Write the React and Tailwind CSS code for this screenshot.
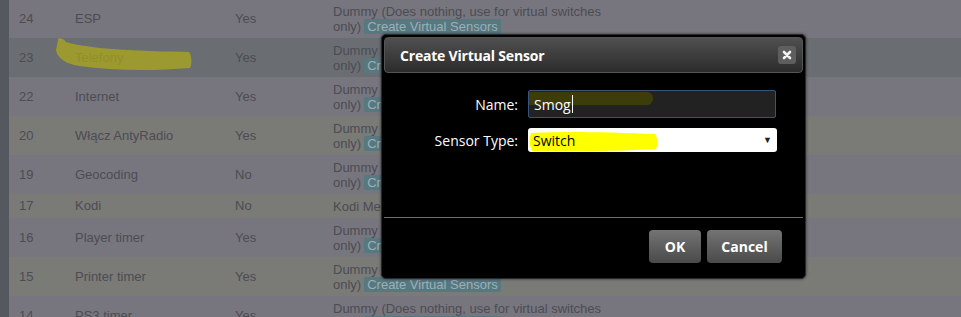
import React from 'react';

const rows = [
  { id: 24, name: 'ESP', enabled: 'Yes', type: 'dummy', h: 'h-[38px]', bg: 'bg-[#77767e]' },
  { id: 23, name: 'Telefony', enabled: 'Yes', type: 'dummy', h: 'h-[39px]', bg: 'bg-[#6a6e72]' },
  { id: 22, name: 'Internet', enabled: 'Yes', type: 'dummy', h: 'h-[39px]', bg: 'bg-[#77767e]' },
  { id: 20, name: 'Włącz AntyRadio', enabled: 'Yes', type: 'dummy', h: 'h-[39px]', bg: 'bg-[#7a7a77]' },
  { id: 19, name: 'Geocoding', enabled: 'No', type: 'dummy', h: 'h-[39px]', bg: 'bg-[#77767e]' },
  { id: 17, name: 'Kodi', enabled: 'No', type: 'kodi', h: 'h-[24px]', bg: 'bg-[#7a7a77]' },
  { id: 16, name: 'Player timer', enabled: 'Yes', type: 'dummy', h: 'h-[39px]', bg: 'bg-[#77767e]' },
  { id: 15, name: 'Printer timer', enabled: 'Yes', type: 'dummy', h: 'h-[39px]', bg: 'bg-[#7a7a77]' },
  { id: 14, name: 'PS3 timer', enabled: 'Yes', type: 'dummy', h: 'h-[39px]', bg: 'bg-[#77767e]' },
];

function TypeCell({ type }) {
  if (type === 'kodi') {
    return <div className="leading-[15px]">Kodi Media Server</div>;
  }
  return (
    <div className="leading-[15px]">
      <div className="whitespace-nowrap">Dummy (Does nothing, use for virtual switches</div>
      <div className="flex items-center whitespace-nowrap">
        only)
        <span className="ml-[3px] bg-[#587880] text-[#9ab0b7] px-[3px] leading-[15px] rounded-[1px]">
          Create Virtual Sensors
        </span>
      </div>
    </div>
  );
}

function HardwareTable() {
  return (
    <div className="flex-1 flex flex-col text-[13px] text-[#4c4c53]">
      {rows.map((r) => (
        <div key={r.id} className={`flex items-center shrink-0 ${r.h} ${r.bg}`}>
          <div className="w-[66px] pl-[10px]">{r.id}</div>
          <div className="w-[160px]">{r.name}</div>
          <div className="w-[98px]">{r.enabled}</div>
          <div className="flex-1">
            <TypeCell type={r.type} />
          </div>
        </div>
      ))}
    </div>
  );
}

function CreateSensorDialog() {
  return (
    <div className="absolute left-[381px] top-[34px] w-[425px] h-[245px] bg-black border border-[#2a2a2a] rounded-[5px] p-[2px] flex flex-col font-['Open_Sans',sans-serif] shadow-[0_0_3px_rgba(0,0,0,0.6)]">
      <div className="h-[36px] shrink-0 rounded-[4px] border border-[#555] bg-gradient-to-b from-[#505050] to-[#2c2c2c] flex items-center justify-between pl-[15px] pr-[6px]">
        <span className="text-white font-bold text-[14px] tracking-[-0.2px]">Create Virtual Sensor</span>
        <button className="w-[18px] h-[18px] rounded-[3px] bg-[#5e5e5e] flex items-center justify-center">
          <svg width="10" height="10" viewBox="0 0 10 10">
            <path d="M2 2 L8 8 M8 2 L2 8" stroke="#f2f2f2" strokeWidth="2.6" strokeLinecap="round" />
          </svg>
        </button>
      </div>

      <div className="flex flex-col gap-[10px] pt-[17px] text-[14px] text-white">
        <div className="flex items-center">
          <label className="w-[144px] text-right pr-[10px]">Name:</label>
          <div className="relative w-[248px] h-[28px] bg-[#222] border border-[#3e5278] rounded-[2px] flex items-center pl-[5px]">
            <span className="absolute left-0 top-[1px] w-[124px] h-[13px] bg-[#3d3d0c] rounded-r-[6px]" />
            <span className="relative">Smog</span>
            <span className="relative w-px h-[18px] bg-white ml-px" />
          </div>
        </div>
        <div className="flex items-center">
          <label className="w-[144px] text-right pr-[10px]">Sensor Type:</label>
          <div className="relative w-[249px] h-[24px] bg-white rounded-[3px] flex items-center justify-between pl-[5px] pr-[5px] text-black">
            <svg className="absolute left-px top-[2px]" width="130" height="22" viewBox="0 0 130 22">
              <path d="M2 3 C30 1 80 2 126 4 C129 8 129 15 127 19 C90 21 40 22 3 21 C0 15 0 8 2 3 Z" fill="#ffff00" />
            </svg>
            <span className="relative">Switch</span>
            <span className="text-[9px] text-[#222]">▼</span>
          </div>
        </div>
      </div>

      <div className="mt-auto border-t border-[#6f6f6f] pt-[12px] pb-[13px] pr-[21px] flex justify-end gap-[6px]">
        <button className="w-[52px] h-[33px] rounded-[4px] bg-gradient-to-b from-[#747474] to-[#4a4a4a] text-white font-bold text-[14px]">
          OK
        </button>
        <button className="w-[75px] h-[33px] rounded-[4px] bg-gradient-to-b from-[#747474] to-[#4a4a4a] text-white font-bold text-[14px]">
          Cancel
        </button>
      </div>
    </div>
  );
}

export default function App() {
  return (
    <div className="relative w-[961px] h-[317px] overflow-hidden flex bg-[#55585f] font-['Liberation_Sans',Arial,sans-serif]">
      <div className="w-[9px] shrink-0" />
      <HardwareTable />

      {/* marker stroke over "Telefony" */}
      <svg className="absolute left-[54px] top-[36px] opacity-70" width="140" height="38" viewBox="0 0 140 38">
        <path
          d="M4 4 C3 2 8 1 12 6 C40 14 90 15 135 16 C138 20 138 28 136 32 C100 35 60 35 25 30 C12 28 3 22 2 14 Z"
          fill="#b0ac14"
        />
      </svg>

      <CreateSensorDialog />
    </div>
  );
}
